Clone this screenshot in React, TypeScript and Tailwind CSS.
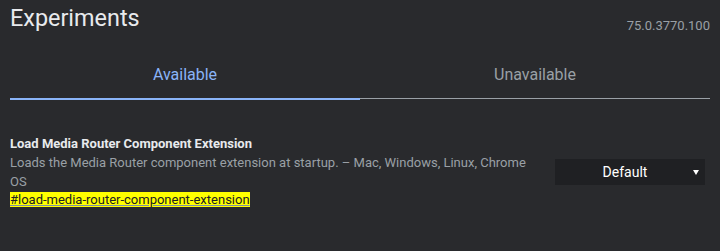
import React from "react";

export default function App() {
  return (
    <div
      className="w-[720px] h-[251px] bg-[#292a2d] px-[10px] overflow-hidden"
      style={{ fontFamily: "Roboto, 'Noto Sans', sans-serif" }}
    >
      <div className="flex justify-between items-start h-[32px]">
        <h1 className="pt-[4px] text-[23.4px] leading-[28px] text-[#e8eaed] font-normal">
          Experiments
        </h1>
        <span className="mt-[18px] text-[13px] leading-[16px] text-[#9aa0a6]">
          75.0.3770.100
        </span>
      </div>

      <div className="flex">
        <div className="flex-1 pt-[33px] pb-[13px] text-center text-[16px] leading-[20px] text-[#8ab4f8] border-b-2 border-[#8ab4f8]">
          Available
        </div>
        <div className="flex-1 flex flex-col">
          <div className="flex-1 pt-[33px] pb-[13px] text-center text-[16px] leading-[20px] text-[#9aa0a6]">
            Unavailable
          </div>
          <div className="h-[1px] bg-[#9aa0a6]" />
          <div className="h-[1px]" />
        </div>
      </div>

      <div className="mt-[34px] flex items-center">
        <div className="flex-1 min-w-0">
          <div className="text-[13px] leading-[19px] font-bold text-[#e8eaed]">
            Load Media Router Component Extension
          </div>
          <div className="mt-[1px] text-[13px] leading-[18.7px] text-[#9aa0a6]">
            Loads the Media Router component extension at startup. – Mac, Windows, Linux, Chrome OS
          </div>
          <div className="text-[13px] leading-[18.7px]">
            <a className="bg-[#ffff00] text-[#202124] underline decoration-[#7c8fa6]">
              #load-media-router-component-extension
            </a>
          </div>
        </div>
        <div className="ml-[25px] mr-[5px] w-[150px] h-[26px] bg-[#1f2023] flex items-center shrink-0">
          <span className="flex-1 text-center pl-[2px] text-[14px] text-white leading-[16px]">
            Default
          </span>
          <svg width="6" height="5" viewBox="0 0 6 5" className="mr-[6px]">
            <polygon points="0,0 6,0 3,5" fill="#ffffff" />
          </svg>
        </div>
      </div>
    </div>
  );
}
